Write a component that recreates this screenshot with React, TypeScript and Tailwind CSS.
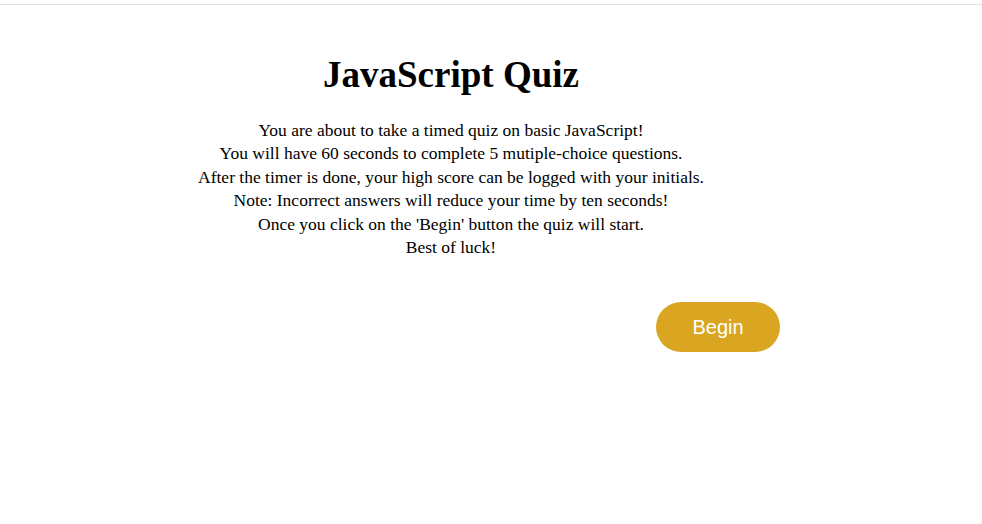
export default function App() {
  return (
    <div className="min-h-screen bg-white font-['Liberation_Serif',serif] text-black">
      <div className="h-[5px] border-b border-[#e0e0e0]" />
      <main className="ml-[122px] w-[658px] pt-[50px]">
        <h1 className="text-center text-[37px] font-bold leading-[40px]">JavaScript Quiz</h1>
        <div className="mt-[24px] text-center text-[17.5px] leading-[23.4px]">
          <p>You are about to take a timed quiz on basic JavaScript!</p>
          <p>You will have 60 seconds to complete 5 mutiple-choice questions.</p>
          <p>After the timer is done, your high score can be logged with your initials.</p>
          <p>Note: Incorrect answers will reduce your time by ten seconds!</p>
          <p>Once you click on the 'Begin' button the quiz will start.</p>
          <p>Best of luck!</p>
        </div>
        <div className="mt-[43px] flex justify-end">
          <button className="h-[50px] w-[124px] rounded-full bg-[#daa520] font-['Liberation_Sans',sans-serif] text-[20px] text-white">
            Begin
          </button>
        </div>
      </main>
    </div>
  );
}
